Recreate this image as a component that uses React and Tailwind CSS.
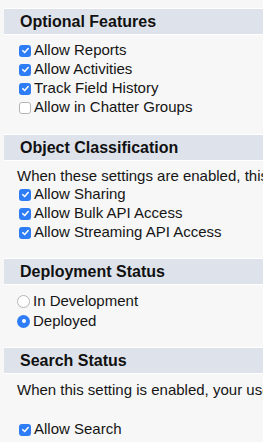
import React from "react";

function Check({ checked }) {
  if (checked) {
    return (
      <span className="inline-flex items-center justify-center w-[12px] h-[12px] rounded-[3px] bg-[#2f7df6] shrink-0">
        <svg width="9" height="9" viewBox="0 0 10 10">
          <path d="M2 5.2 L4.1 7.3 L8 2.8" fill="none" stroke="white" strokeWidth="1.7" strokeLinecap="round" strokeLinejoin="round" />
        </svg>
      </span>
    );
  }
  return <span className="inline-block w-[12px] h-[12px] rounded-[3px] bg-white border border-[#b5b5b5] shrink-0" />;
}

function Radio({ checked }) {
  if (checked) {
    return (
      <span className="inline-flex items-center justify-center w-[13px] h-[13px] rounded-full bg-[#2f7df6] shrink-0">
        <span className="w-[4px] h-[4px] rounded-full bg-white" />
      </span>
    );
  }
  return <span className="inline-block w-[13px] h-[13px] rounded-full bg-white border border-[#b5b5b5] shrink-0" />;
}

function Header({ children }) {
  return (
    <div className="ml-[4px] h-[27px] bg-[#dee3eb] border-t border-b border-white flex items-center pl-[16px] text-[16px] font-bold text-[#111]">
      {children}
    </div>
  );
}

function CheckRow({ checked, label }) {
  return (
    <div className="flex items-center h-[19px] pl-[19px] gap-[3px]">
      <Check checked={checked} />
      <span>{label}</span>
    </div>
  );
}

function RadioRow({ checked, label }) {
  return (
    <div className="flex items-center h-[20px] pl-[17px] gap-[3px]">
      <Radio checked={checked} />
      <span>{label}</span>
    </div>
  );
}

export default function App() {
  return (
    <div
      className="w-[263px] h-[442px] overflow-hidden bg-[#f7f7f7] text-[15px] text-[#151515] whitespace-nowrap pt-[8px]"
      style={{ fontFamily: '"Liberation Sans", Arial, sans-serif' }}
    >
      <Header>Optional Features</Header>
      <div className="pt-[6px] mb-[17px]">
        <CheckRow checked label="Allow Reports" />
        <CheckRow checked label="Allow Activities" />
        <CheckRow checked label="Track Field History" />
        <CheckRow checked={false} label="Allow in Chatter Groups" />
      </div>

      <Header>Object Classification</Header>
      <div className="pt-[5px] mb-[16px]">
        <div className="h-[19px] leading-[19px] pl-[17px]">
          When these settings are enabled, this object is classified as an Enterprise Application object.
        </div>
        <CheckRow checked label="Allow Sharing" />
        <CheckRow checked label="Allow Bulk API Access" />
        <CheckRow checked label="Allow Streaming API Access" />
      </div>

      <Header>Deployment Status</Header>
      <div className="pt-[6px] mb-[16px]">
        <RadioRow checked={false} label="In Development" />
        <RadioRow checked label="Deployed" />
      </div>

      <Header>Search Status</Header>
      <div className="pt-[6px]">
        <div className="h-[19px] leading-[19px] pl-[17px]">
          When this setting is enabled, your users can find records of this object type when they search.
        </div>
        <div className="mt-[21px]">
          <CheckRow checked label="Allow Search" />
        </div>
      </div>
    </div>
  );
}
